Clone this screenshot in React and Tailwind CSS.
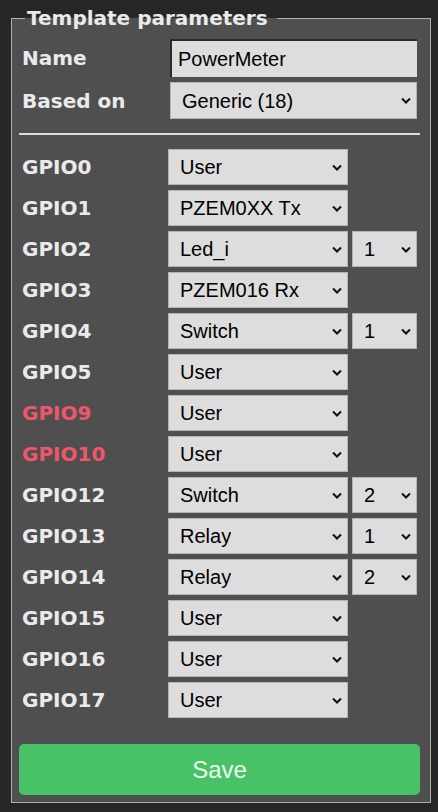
const rows = [
  { pin: 'GPIO0', value: 'User' },
  { pin: 'GPIO1', value: 'PZEM0XX Tx' },
  { pin: 'GPIO2', value: 'Led_i', index: '1' },
  { pin: 'GPIO3', value: 'PZEM016 Rx' },
  { pin: 'GPIO4', value: 'Switch', index: '1' },
  { pin: 'GPIO5', value: 'User' },
  { pin: 'GPIO9', value: 'User', warn: true },
  { pin: 'GPIO10', value: 'User', warn: true },
  { pin: 'GPIO12', value: 'Switch', index: '2' },
  { pin: 'GPIO13', value: 'Relay', index: '1' },
  { pin: 'GPIO14', value: 'Relay', index: '2' },
  { pin: 'GPIO15', value: 'User' },
  { pin: 'GPIO16', value: 'User' },
  { pin: 'GPIO17', value: 'User' },
];

const labelFont = { fontFamily: '"DejaVu Sans", Verdana, sans-serif' };
const fieldFont = { fontFamily: '"Liberation Sans", Arial, sans-serif' };

function Chevron() {
  return (
    <svg className="w-[10px] h-[7px] shrink-0" viewBox="0 0 10 7" fill="none" stroke="#111" strokeWidth={2}>
      <path d="M1 1.5l4 4 4-4" />
    </svg>
  );
}

function Select({ value, className }) {
  return (
    <div
      className={`flex items-center justify-between bg-[#dddddd] border border-[#b4b4b4] text-[20px] text-black pl-[11px] pr-[5px] ${className}`}
      style={fieldFont}
    >
      <span className="truncate">{value}</span>
      <Chevron />
    </div>
  );
}

export default function App() {
  return (
    <div className="min-h-[812px] w-[438px] bg-[#262626] pt-[6px]">
      <fieldset className="ml-[11px] w-[420px] border border-[#b0b0b0] bg-[#4f4f4f] pl-[7px] pr-[10px] pb-[7px]">
        <legend
          className="ml-[6px] pl-[2px] pr-[9px] text-[20px] leading-[24px] font-bold text-[#eaeaea]"
          style={labelFont}
        >
          Template parameters
        </legend>

        <div className="pt-[9px]">
          <div className="flex items-center h-[38px]">
            <span className="w-[151px] pl-[3px] text-[20px] font-bold text-[#eaeaea]" style={labelFont}>
              Name
            </span>
            <div
              className="w-[247px] h-[38px] flex items-center bg-[#dddddd] border-t-2 border-l-2 border-[#2a2a2a] pl-[6px] text-[20px] text-black"
              style={fieldFont}
            >
              PowerMeter
            </div>
          </div>
          <div className="flex items-center h-[37px] mt-[5px]">
            <span className="w-[151px] pl-[3px] text-[20px] font-bold text-[#eaeaea]" style={labelFont}>
              Based on
            </span>
            <Select value="Generic (18)" className="w-[247px] h-[37px]" />
          </div>
        </div>

        <hr className="mt-[14px] border-0 h-[2px] bg-[#dcdcdc]" />

        <div className="mt-[14px] flex flex-col gap-[5px]">
          {rows.map((row) => (
            <div key={row.pin} className="flex items-center h-[36px]">
              <span
                className={`w-[149px] pl-[3px] text-[20px] font-bold ${row.warn ? 'text-[#f0566a]' : 'text-[#eaeaea]'}`}
                style={labelFont}
              >
                {row.pin}
              </span>
              <Select value={row.value} className="w-[180px] h-[36px]" />
              {row.index && <Select value={row.index} className="ml-[4px] w-[65px] h-[36px]" />}
            </div>
          ))}
        </div>

        <button
          className="mt-[26px] w-full h-[51px] rounded-[5px] bg-[#47c266] text-[24px] text-[#eefcee]"
          style={fieldFont}
        >
          Save
        </button>
      </fieldset>
    </div>
  );
}
